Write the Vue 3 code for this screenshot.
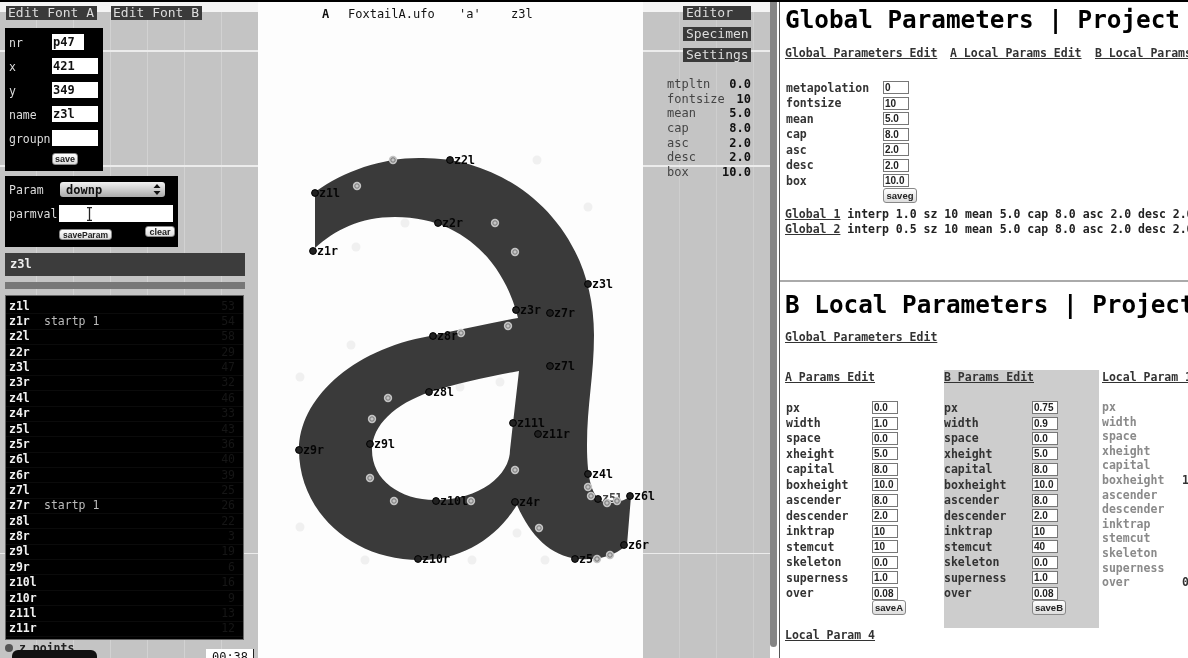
<script setup>
const formRows = [
  { label: 'nr', value: 'p47', short: true },
  { label: 'x', value: '421' },
  { label: 'y', value: '349' },
  { label: 'name', value: 'z3l' },
  { label: 'groupn', value: '' },
]
const points = [
  ['z1l', '', 53], ['z1r', 'startp 1', 54], ['z2l', '', 58], ['z2r', '', 29], ['z3l', '', 47], ['z3r', '', 32],
  ['z4l', '', 46], ['z4r', '', 33], ['z5l', '', 43], ['z5r', '', 36], ['z6l', '', 40], ['z6r', '', 39],
  ['z7l', '', 25], ['z7r', 'startp 1', 26], ['z8l', '', 22], ['z8r', '', 3], ['z9l', '', 19], ['z9r', '', 6],
  ['z10l', '', 16], ['z10r', '', 9], ['z11l', '', 13], ['z11r', '', 12],
]
const stats = [
  ['mtpltn', '0.0'], ['fontsize', '10'], ['mean', '5.0'], ['cap', '8.0'], ['asc', '2.0'], ['desc', '2.0'], ['box', '10.0'],
]
const globals = [
  ['metapolation', '0'], ['fontsize', '10'], ['mean', '5.0'], ['cap', '8.0'], ['asc', '2.0'], ['desc', '2.0'], ['box', '10.0'],
]
const names = ['px', 'width', 'space', 'xheight', 'capital', 'boxheight', 'ascender', 'descender', 'inktrap', 'stemcut', 'skeleton', 'superness', 'over']
const aVals = ['0.0', '1.0', '0.0', '5.0', '8.0', '10.0', '8.0', '2.0', '10', '10', '0.0', '1.0', '0.08']
const bVals = ['0.75', '0.9', '0.0', '5.0', '8.0', '10.0', '8.0', '2.0', '10', '40', '0.0', '1.0', '0.08']
const cVals = ['', '', '', '', '', '10.0', '', '', '', '', '', '', '0.08']
const labels = [
  ['z1l', 315, 193], ['z1r', 313, 251], ['z2l', 450, 160], ['z2r', 438, 223], ['z3l', 588, 284], ['z3r', 516, 310],
  ['z7r', 550, 313], ['z8r', 433, 336], ['z7l', 550, 366], ['z8l', 429, 392], ['z9r', 299, 450], ['z9l', 370, 444],
  ['z11l', 513, 423], ['z11r', 538, 434], ['z4l', 588, 474], ['z6l', 630, 496], ['z4r', 515, 502], ['z10l', 436, 501],
  ['z10r', 418, 559], ['z5', 575, 559], ['z6r', 624, 545],
]
const controls = [
  [393, 160], [357, 186], [495, 223], [515, 252], [508, 326], [461, 333], [388, 398], [372, 419], [370, 478], [394, 501],
  [471, 501], [515, 470], [539, 528], [588, 487], [591, 496], [607, 503], [617, 501], [597, 559], [610, 555],
]
const faint = [
  [537, 160], [588, 207], [405, 223], [356, 247], [351, 345], [300, 377], [500, 382], [460, 387], [300, 527], [365, 560],
  [472, 560], [517, 533], [545, 560],
]
</script>

<template>
  <div class="screen">
    <aside class="left">
      <nav class="tabs">
        <span class="tab">Edit Font A</span>
        <span class="tab">Edit Font B</span>
      </nav>
      <form class="box point-form" @submit.prevent>
        <div v-for="r in formRows" :key="r.label" class="form-row">
          <label>{{ r.label }}</label>
          <input :class="{ short: r.short }" :value="r.value" readonly />
        </div>
        <button class="btn save">save</button>
      </form>
      <form class="box param-form" @submit.prevent>
        <div class="param-row">
          <label>Param</label>
          <div class="select">
            <span>downp</span>
            <svg width="8" height="11" viewBox="0 0 8 11"><path d="M4 0 7.5 4H.5zM4 11 .5 7h7z" fill="#111" /></svg>
          </div>
        </div>
        <div class="parm-val">
          <label>parmval</label>
          <div class="val-field">
            <svg width="7" height="14" viewBox="0 0 7 14"><path d="M1 .7h5M3.5 .7v12.6M1 13.3h5" fill="none" stroke="#222" stroke-width="1.3" /></svg>
          </div>
        </div>
        <div class="param-btns">
          <button class="btn save-param">saveParam</button>
          <button class="btn clear">clear</button>
        </div>
      </form>
      <div class="current">z3l</div>
      <div class="current-sub"></div>
      <ul class="points">
        <li v-for="p in points" :key="p[0]">
          <b>{{ p[0] }}</b><span class="note">{{ p[1] }}</span><span class="num">{{ p[2] }}</span>
        </li>
      </ul>
      <div class="legend"><i></i><b>z points</b></div>
      <div class="pill"></div>
      <div class="time">00:38</div>
    </aside>

    <main class="center">
      <header class="glyph-head">
        <b>A</b><span class="ufo">FoxtailA.ufo</span><span class="ch">'a'</span><span>z3l</span>
      </header>
      <svg class="glyph" width="385" height="632" viewBox="258 24 385 632">
        <circle v-for="(f, i) in faint" :key="'f' + i" :cx="f[0]" :cy="f[1]" r="4.5" fill="#f0f0f0" />
        <path
          fill="#3a3a3a"
          fill-rule="evenodd"
          d="M315 192C345 170 385 157 423 158C510 158 594 225 594 335C594 375 587 405 587 445C587 480 592 503 610 503C618 503 625 500 631 496L627 545C612 558 595 560 578 559C550 556 530 535 517 505C495 540 460 560 420 560C350 560 299 510 299 450C299 400 350 350 430 336C460 330 490 323 518 318C505 265 465 217 395 217C360 217 335 230 315 248Z
             M519 371C490 376 455 384 430 392C395 404 372 425 372 450C372 480 400 500 435 500C480 500 510 475 510 450L513 423Z"
        />
        <text class="clipped" x="602" y="502">z5l</text>
        <circle cx="598" cy="499" r="3.4" fill="#222" stroke="#000" stroke-width="1" />
        <g v-for="(c, i) in controls" :key="'c' + i">
          <circle :cx="c[0]" :cy="c[1]" r="4.2" fill="#c4c4c4" />
          <circle :cx="c[0]" :cy="c[1]" r="2.2" fill="none" stroke="#777" stroke-width="1" />
        </g>
        <g v-for="l in labels" :key="l[0]">
          <circle :cx="l[1]" :cy="l[2]" r="3.4" fill="#222" stroke="#000" stroke-width="1" />
          <text class="pt" :x="l[1] + 4" :y="l[2] + 4">{{ l[0] }}</text>
        </g>
      </svg>
    </main>

    <aside class="panel">
      <nav class="side-tabs">
        <span>Editor</span>
        <span>Specimen</span>
        <span>Settings</span>
      </nav>
      <dl class="stats">
        <div v-for="s in stats" :key="s[0]">
          <dt>{{ s[0] }}</dt><dd>{{ s[1] }}</dd>
        </div>
      </dl>
    </aside>

    <div class="splitter"></div>

    <section class="pages">
      <article class="page top">
        <h1>Global Parameters | Project</h1>
        <div class="links">
          <a>Global Parameters Edit</a><a>A Local Params Edit</a><a>B Local Params Edit</a>
        </div>
        <div v-for="g in globals" :key="g[0]" class="g-row">
          <label>{{ g[0] }}</label><input :value="g[1]" readonly />
        </div>
        <button class="btn saveg">saveg</button>
        <p class="g-line"><a>Global 1</a> interp 1.0 sz 10 mean 5.0 cap 8.0 asc 2.0 desc 2.0</p>
        <p class="g-line"><a>Global 2</a> interp 0.5 sz 10 mean 5.0 cap 8.0 asc 2.0 desc 2.0</p>
      </article>
      <article class="page bottom">
        <h1>B Local Parameters | Project</h1>
        <div class="links one"><a>Global Parameters Edit</a></div>
        <div class="cols">
          <div class="col">
            <a class="col-head">A Params Edit</a>
            <div v-for="(n, i) in names" :key="n" class="p-row"><label>{{ n }}</label><input :value="aVals[i]" readonly /></div>
            <button class="btn save-col">saveA</button>
          </div>
          <div class="col active">
            <a class="col-head">B Params Edit</a>
            <div v-for="(n, i) in names" :key="n" class="p-row"><label>{{ n }}</label><input :value="bVals[i]" readonly /></div>
            <button class="btn save-col">saveB</button>
          </div>
          <div class="col muted">
            <a class="col-head">Local Param 1</a>
            <div v-for="(n, i) in names" :key="n" class="m-row"><label>{{ n }}</label><span>{{ cVals[i] }}</span></div>
          </div>
        </div>
        <a class="col-head last">Local Param 4</a>
      </article>
    </section>
  </div>
</template>

<style>
html, body { margin: 0; background: #fff; overflow: hidden; }
</style>

<style scoped>
* { box-sizing: border-box; }
.screen {
  width: 1188px;
  height: 658px;
  display: flex;
  overflow: hidden;
  border-top: 2px solid #000;
  background: #fff;
  color: #222;
  font-family: "DejaVu Sans Mono", monospace;
  font-size: 11.5px;
  filter: blur(0.55px);
}
a { text-decoration: underline; color: #333; }

/* left column */
.left {
  position: relative;
  width: 258px;
  flex: none;
  padding-left: 5px;
  background:
    linear-gradient(#f4f4f4 0 10px, transparent 10px),
    linear-gradient(transparent 48px, #ececec 48px 50px, transparent 50px),
    linear-gradient(transparent 163px, #ececec 163px 165px, transparent 165px),
    linear-gradient(transparent 551px, #ececec 551px 552px, transparent 552px),
    repeating-linear-gradient(90deg, transparent 0 36px, #d2d2d2 36px 37px),
    #c4c4c4;
}
.tabs { display: flex; gap: 14px; margin: 4px 0 0 1px; }
.tab {
  height: 14px;
  width: 91px;
  padding-left: 2px;
  background: #3a3a3a;
  color: #ddd;
  font-size: 13px;
  line-height: 14px;
  white-space: nowrap;
}
.box { background: #000; color: #ddd; }
.point-form { width: 98px; height: 143px; margin-top: 8px; padding: 6px 0 0 4px; }
.form-row { display: flex; align-items: center; height: 16px; margin-bottom: 8px; }
.form-row label { width: 43px; flex: none; font-size: 11.5px; padding-top: 1px; }
.form-row input {
  width: 46px;
  height: 16px;
  border: 0;
  padding: 0 1px;
  background: #fff;
  color: #111;
  font: bold 12px "DejaVu Sans Mono", monospace;
  outline: none;
}
.form-row input.short { width: 32px; }
.btn {
  display: block;
  padding: 0;
  border: 1px solid #888;
  border-radius: 3px;
  background: linear-gradient(#fff, #ddd);
  color: #222;
  font: bold 9px "Liberation Sans", sans-serif;
}
.save { width: 26px; height: 12px; margin: -1px 0 0 43px; }
.param-form { width: 173px; height: 71px; margin-top: 5px; padding: 6px 0 0 4px; }
.param-row { display: flex; align-items: center; height: 15px; }
.param-row label { width: 51px; flex: none; }
.select {
  width: 105px;
  height: 15px;
  padding: 0 4px 0 6px;
  display: flex;
  align-items: center;
  justify-content: space-between;
  border-radius: 3px;
  background: linear-gradient(#f2f2f2, #aaa);
  color: #111;
  font-weight: bold;
  font-size: 12px;
}
.parm-val { display: flex; align-items: center; margin-top: 8px; height: 17px; }
.parm-val label { width: 50px; flex: none; }
.val-field { width: 114px; height: 17px; background: #fff; padding: 2px 0 0 27px; display: flex; }
.param-btns { display: flex; margin-top: 4px; height: 14px; }
.save-param { width: 53px; height: 11px; margin: 3px 0 0 50px; font-size: 8.5px; }
.clear { width: 30px; height: 11px; margin: 0 0 0 33px; }
.current {
  width: 240px;
  height: 23px;
  margin-top: 6px;
  padding-left: 5px;
  background: #3c3c3c;
  color: #eee;
  font-weight: bold;
  font-size: 12px;
  line-height: 22px;
}
.current-sub { width: 240px; height: 7px; margin-top: 6px; background: #777; }
.points {
  width: 239px;
  height: 345px;
  margin: 6px 0 0;
  padding: 3px 0 0;
  list-style: none;
  background: #000;
  border: 1px solid #666;
}
.points li {
  display: flex;
  height: 15.37px;
  padding: 0 8px 0 3px;
  align-items: center;
  line-height: 15px;
  border-bottom: 1px solid #0b0b0b;
}
.points b { width: 35px; flex: none; color: #f0f0f0; }
.note { color: #bbb; }
.num { margin-left: auto; color: #161616; }
.legend { display: flex; align-items: center; gap: 6px; margin: 1px 0 0; height: 13px; font-size: 11.5px; color: #222; }
.legend i { width: 8px; height: 8px; border-radius: 50%; background: #555; }
.pill {
  position: absolute;
  left: 12px;
  top: 648px;
  width: 85px;
  height: 12px;
  border-radius: 6px 6px 0 0;
  background: #111;
}
.time {
  position: absolute;
  left: 206px;
  top: 647px;
  width: 48px;
  height: 12px;
  padding: 1px 0 0 1px;
  background: #fff;
  border-right: 1px solid #222;
  text-align: center;
  color: #111;
  font-size: 12px;
  line-height: 14px;
}

/* centre */
.center { position: relative; z-index: 1; width: 385px; flex: none; background: #fdfdfd; }
.glyph-head {
  display: flex;
  height: 22px;
  padding: 5px 0 0 64px;
  font-size: 12px;
  line-height: 14px;
  color: #111;
}
.glyph-head b { width: 26px; }
.ufo { width: 111px; }
.ch { width: 52px; }
.glyph { display: block; overflow: visible; }
.pt { font: bold 11.6px "DejaVu Sans Mono", monospace; fill: #050505; }
.clipped { font: bold 11.6px "DejaVu Sans Mono", monospace; fill: #444; }

/* right-hand stats */
.panel {
  width: 127px;
  flex: none;
  background:
    linear-gradient(#f4f4f4 0 10px, transparent 10px),
    linear-gradient(transparent 48px, #ececec 48px 50px, transparent 50px),
    linear-gradient(transparent 163px, #ececec 163px 165px, transparent 165px),
    linear-gradient(transparent 551px, #ececec 551px 552px, transparent 552px),
    repeating-linear-gradient(90deg, transparent 0 36px, #cecece 36px 37px),
    #c4c4c4;
  padding: 4px 19px 0 24px;
}
.side-tabs { display: flex; flex-direction: column; align-items: flex-end; gap: 7px; }
.side-tabs span {
  width: 68px;
  height: 14px;
  padding-left: 3px;
  background: #3a3a3a;
  color: #ddd;
  font-size: 13px;
  line-height: 14px;
  white-space: nowrap;
}
.stats { margin: 15px 0 0; font-size: 12px; }
.stats div { display: flex; justify-content: space-between; height: 14.7px; line-height: 14.7px; }
.stats dt { color: #444; }
.stats dd { margin: 0; font-weight: bold; color: #111; }

.splitter {
  width: 7px;
  height: 645px;
  flex: none;
  background: #858585;
  border-radius: 0 0 4px 4px;
}

/* right pages */
.pages {
  flex: 1;
  min-width: 0;
  margin-left: 2px;
  border-left: 1px solid #555;
  display: flex;
  flex-direction: column;
}
.page { overflow: hidden; padding-left: 5px; white-space: nowrap; }
.page.top { height: 280px; flex: none; padding-top: 4px; border-bottom: 2px solid #aaa; }
.page.bottom { flex: 1; padding-top: 9px; }
h1 { margin: 0; height: 28px; font-size: 24.3px; line-height: 28px; font-weight: bold; color: #000; }
.links { display: flex; margin-top: 12px; height: 15px; line-height: 15px; font-weight: bold; }
.links a { width: 165px; flex: none; }
.links a:nth-child(2) { width: 145px; }
.links.one { margin-top: 10.5px; }
.g-row { display: flex; height: 15.5px; align-items: center; font-weight: bold; color: #333; }
.links + .g-row { margin-top: 19px; }
.g-row label { width: 98px; flex: none; padding-left: 1px; }
input { font-family: "Liberation Sans", sans-serif; }
.g-row input, .p-row input {
  width: 26px;
  height: 13px;
  padding: 0 1px;
  border: 1px solid #777;
  background: #fff;
  color: #222;
  font-size: 10px;
  font-weight: bold;
  outline: none;
}
.saveg { width: 34px; height: 15px; margin: -1px 0 0 98px; font-size: 9.5px; }
.g-line { margin: 0; height: 15px; line-height: 15px; font-weight: bold; color: #222; }
.saveg + .g-line { margin-top: 4.5px; }
.g-line a { font-weight: bold; }
.cols { display: flex; height: 258px; margin-top: 25.5px; }
.col { width: 159px; flex: none; }
.col-head { display: block; height: 15px; line-height: 15px; font-weight: bold; margin-bottom: 14.8px; }
.col.active { width: 155px; margin-right: 3px; background: #cdcdcd; }
.p-row { display: flex; height: 15.47px; align-items: center; font-weight: bold; color: #333; }
.p-row label { width: 87px; flex: none; padding-left: 1px; }
.active .p-row label { width: 88px; padding-left: 0; }
.save-col { width: 34px; height: 15px; margin: -1px 0 0 87px; font-size: 9.5px; }
.active .save-col { margin-left: 88px; }
.col.muted { color: #8a8a8a; }
.m-row { display: flex; height: 14.6px; line-height: 14.6px; font-weight: bold; }
.col.muted .col-head { margin-bottom: 15px; }
.m-row label { width: 80px; flex: none; }
.m-row span { color: #333; }
.col-head.last { margin: 0; }
</style>
